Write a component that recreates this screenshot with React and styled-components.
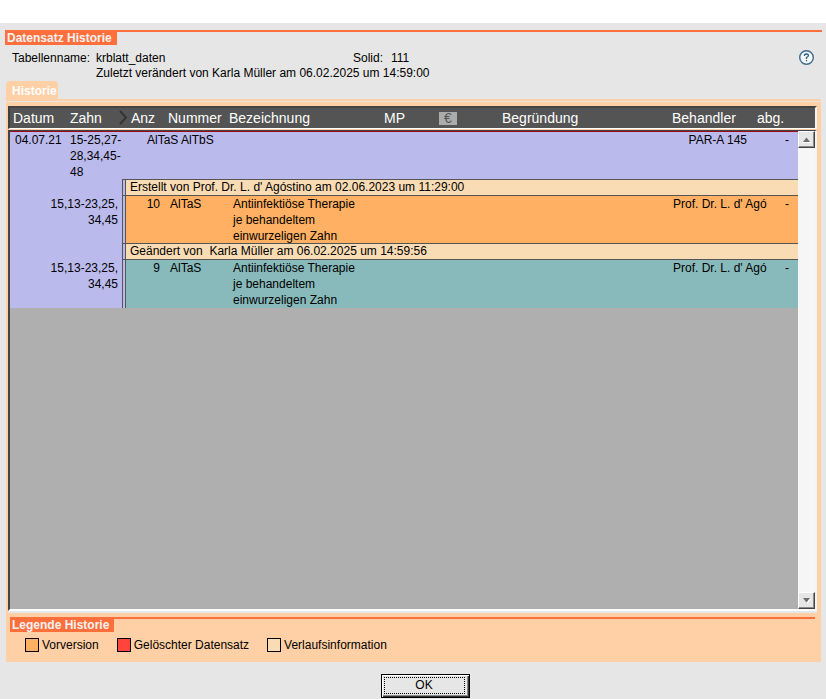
import React from "react";
import styled, { createGlobalStyle } from "styled-components";

const color = {
  page: "#e6e6e6",
  accent: "#ff6f3c",
  peach: "#ffd0a6",
  header: "#545454",
  line: "#555555",
  empty: "#afafaf",
  entry: "#bbbaec",
  info: "#fadcb4",
  previous: "#ffb062",
  current: "#88babb",
  deleted: "#ff443c",
};

const GlobalStyle = createGlobalStyle`
  * { box-sizing: border-box; }
  html, body { margin: 0; padding: 0; }
  body {
    background: #fff;
    color: #000;
    font: 12px/15px "Liberation Sans", Arial, sans-serif;
  }
  button { font: inherit; color: inherit; }
`;

const Page = styled.div`
  display: flex;
  flex-direction: column;
  min-height: 100vh;
  padding-top: 23px;
`;

const Dialog = styled.main`
  flex: 1;
  display: flex;
  flex-direction: column;
  padding: 7px 4px 1px 5px;
  background: ${color.page};
`;

const Heading = styled.h2`
  margin: 0;
  height: 15px;
  border-top: 2px solid ${color.accent};
  font-size: 12px;
  line-height: 13px;
`;

const HeadingLabel = styled.span`
  display: inline-block;
  padding: 0 5px 0 2px;
  background: ${color.accent};
  color: #f2f2f2;
`;

const RecordBar = styled.section`
  display: flex;
  justify-content: space-between;
  padding: 6px 8px 0 7px;
`;

const RecordInfo = styled.dl`
  display: grid;
  grid-template-columns: 84px 257px 38px auto;
  margin: 0;
  white-space: nowrap;
`;

const Term = styled.dt``;

const Value = styled.dd`
  margin: 0;
`;

const ChangeNote = styled.dd`
  grid-column: 2 / -1;
  margin: 0;
`;

const HelpButton = styled.button`
  width: 15px;
  height: 15px;
  margin-top: -1px;
  padding: 0;
  border: 0;
  background: none;
`;

const HelpDrawing = styled.svg`
  display: block;
`;

const TabList = styled.div`
  display: flex;
  margin: 0 1px;
  border-bottom: 2px solid ${color.peach};
`;

const Tab = styled.button`
  height: 18px;
  padding: 2px 1px 0 6px;
  border: 0;
  border-radius: 4px 4px 0 0;
  background: ${color.peach};
  color: #fff;
  font-weight: bold;
  line-height: 15px;
`;

const Panel = styled.section`
  flex: 1;
  display: flex;
  flex-direction: column;
  margin: 1px 1px 0;
  padding: 4px 4px 0 2px;
  background: ${color.peach};
`;

const HeaderFrame = styled.div`
  border: 2px solid #3f3f3f;
  border-top-color: #444;
  border-right: 2px solid #f4f4f4;
  border-bottom: 1px solid #fff;
  padding-right: 17px;
  background: ${color.header};
`;

const ListFrame = styled.div`
  flex: 1;
  display: flex;
  min-height: 200px;
  margin-top: 1px;
  border: solid #444;
  border-width: 1px 2px 2px 2px;
  border-right-color: #f4f4f4;
  border-bottom-color: #fff;
`;

const Viewport = styled.div`
  flex: 1;
  min-width: 0;
  overflow: hidden;
  border-top: 1px solid #9a0a18;
  background: ${color.empty};
`;

const Table = styled.table`
  width: 100%;
  table-layout: fixed;
  border-collapse: separate;
  border-spacing: 0;
`;

const Col = styled.col`
  width: ${(p) => p.$width || "auto"};
`;

const HeadCell = styled.th`
  position: relative;
  height: 20px;
  padding: 0 0 0 ${(p) => p.$indent || 2}px;
  color: #fff;
  font-size: 14px;
  font-weight: normal;
  line-height: 20px;
  text-align: left;
  white-space: nowrap;
`;

const Chevron = styled.svg`
  position: absolute;
  top: 2px;
  left: -3px;
`;

const EuroBadge = styled.span`
  display: block;
  width: 18px;
  height: 13px;
  margin-left: 1px;
  background: #acacac;
  color: ${color.header};
  line-height: 13px;
  text-align: center;
`;

const Cell = styled.td`
  padding: 0 ${(p) => p.$right || 0}px 0 ${(p) => p.$left || 0}px;
  background: ${(p) => color[p.$tone || "entry"]};
  line-height: 16px;
  text-align: ${(p) => p.$align || "left"};
  vertical-align: top;
  white-space: pre;
`;

const GutterCell = styled(Cell)`
  border-left: 1px solid ${color.line};
  border-right: 1px solid ${color.line};
`;

const InfoCell = styled(Cell)`
  border-bottom: 1px solid ${color.line};
  box-shadow: 0 -1px 0 ${color.line};
  line-height: 15px;
`;

const InfoGutter = styled(GutterCell)`
  border-bottom: 1px solid ${color.line};
  box-shadow: 0 -1px 0 ${color.line};
`;

const ScrollBar = styled.div`
  display: flex;
  flex-direction: column;
  justify-content: space-between;
  width: 17px;
  background: #f6f6f6;
`;

const ScrollButton = styled.button`
  display: grid;
  place-items: center;
  width: 17px;
  height: 17px;
  padding: 0;
  border: 1px solid #fff;
  border-right-color: #444;
  border-bottom-color: #444;
  background: ${color.page};
  box-shadow: inset -1px -1px 0 #8a8a8a;
`;

const PanelEdge = styled.div`
  height: 2px;
  background: ${color.page};
`;

const Legend = styled.section`
  padding: 4px 2px 10px 2px;
`;

const LegendList = styled.ul`
  display: flex;
  flex-wrap: wrap;
  gap: 18px;
  margin: 6px 0 0;
  padding: 0 0 0 15px;
  list-style: none;
`;

const LegendItem = styled.li`
  display: flex;
  align-items: center;
  gap: 3px;
  line-height: 14px;
`;

const Swatch = styled.span`
  width: 14px;
  height: 14px;
  border: 1px solid #000;
  background: ${(p) => color[p.$tone]};
`;

const Footer = styled.footer`
  display: flex;
  justify-content: center;
  padding: 12px 0 0 23px;
`;

const OkButton = styled.button`
  width: 89px;
  height: 24px;
  padding: 1px;
  border: 1px solid #000;
  background: ${color.page};
  box-shadow: inset 1px 1px 0 #fff, inset -1px -1px 0 #333, inset -2px -2px 0 #888;
`;

const OkFocus = styled.span`
  display: block;
  margin: 0 3px 1px 1px;
  border: 1px dotted #000;
  line-height: 15px;
`;

const columns = ["56px", "56px", "4px", "40px", "61px", "155px", "54px", "64px", null, "87px", "43px"];

const history = [
  { note: "Erstellt von Prof. Dr. L. d' Agóstino am 02.06.2023 um 11:29:00", count: 10, tone: "previous" },
  { note: "Geändert von  Karla Müller am 06.02.2025 um 14:59:56", count: 9, tone: "current" },
];

const Columns = () => (
  <colgroup>
    {columns.map((width, i) => (
      <Col key={i} $width={width} />
    ))}
  </colgroup>
);

const SectionHeading = ({ children }) => (
  <Heading>
    <HeadingLabel>{children}</HeadingLabel>
  </Heading>
);

const Arrow = ({ down }) => (
  <svg width="9" height="7" viewBox="0 0 9 7" aria-hidden="true">
    <path d={down ? "M2 2h7L5.500 6.500z" : "M1 6h8v1H1z"} fill="#fff" />
    <path d={down ? "M1 1h7L4.500 5.500z" : "M1 6h7L4.500 1.500z"} fill="#6e6e6e" />
  </svg>
);

const HistoryEntry = ({ note, count, tone }) => (
  <>
    <tr>
      <Cell colSpan={2} />
      <InfoGutter />
      <InfoCell colSpan={8} $tone="info" $left={4}>{note}</InfoCell>
    </tr>
    <tr>
      <Cell colSpan={2} $align="right" $right={4}>{"15,13-23,25,\n34,45"}</Cell>
      <GutterCell />
      <Cell $tone={tone} $align="right" $right={6}>{count}</Cell>
      <Cell $tone={tone} $left={4}>AlTaS</Cell>
      <Cell $tone={tone} $left={6}>{"Antiinfektiöse Therapie\nje behandeltem\neinwurzeligen Zahn"}</Cell>
      <Cell $tone={tone} />
      <Cell $tone={tone} />
      <Cell $tone={tone} />
      <Cell $tone={tone} $left={5}>Prof. Dr. L. d' Agó</Cell>
      <Cell $tone={tone} $align="right" $right={9}>-</Cell>
    </tr>
  </>
);

export default function App() {
  return (
    <Page>
      <GlobalStyle />
      <Dialog>
        <SectionHeading>Datensatz Historie</SectionHeading>
        <RecordBar>
          <RecordInfo>
            <Term>Tabellenname:</Term>
            <Value>krblatt_daten</Value>
            <Term>Solid:</Term>
            <Value>111</Value>
            <ChangeNote>Zuletzt verändert von Karla Müller am 06.02.2025 um 14:59:00</ChangeNote>
          </RecordInfo>
          <HelpButton type="button" aria-label="Hilfe">
            <HelpDrawing width="15" height="15" viewBox="0 0 15 15" aria-hidden="true">
              <circle cx="7.500" cy="7.500" r="6.800" fill="#f4f8fa" stroke="#3f6c8c" strokeWidth="1.400" />
              <path d="M5.500 6V5q.5-1 2-1 2 0 2 1.500Q9.500 6.500 7.500 7.500V9M7.500 10v1.300" fill="none" stroke="#2f5f82" strokeWidth="1.300" />
            </HelpDrawing>
          </HelpButton>
        </RecordBar>

        <TabList role="tablist">
          <Tab type="button" role="tab" aria-selected="true">Historie</Tab>
        </TabList>

        <Panel>
          <HeaderFrame>
            <Table>
              <Columns />
              <thead>
                <tr>
                  <HeadCell $indent={3}>Datum</HeadCell>
                  <HeadCell $indent={4}>Zahn</HeadCell>
                  <HeadCell>
                    <Chevron width="9" height="15" viewBox="0 0 9 15" aria-hidden="true">
                      <path d="M1 1l6 6.500L1 14" fill="none" stroke="#333" strokeWidth="2" />
                    </Chevron>
                  </HeadCell>
                  <HeadCell $indent={5}>Anz</HeadCell>
                  <HeadCell>Nummer</HeadCell>
                  <HeadCell>Bezeichnung</HeadCell>
                  <HeadCell>MP</HeadCell>
                  <HeadCell>
                    <EuroBadge>€</EuroBadge>
                  </HeadCell>
                  <HeadCell>Begründung</HeadCell>
                  <HeadCell $indent={4}>Behandler</HeadCell>
                  <HeadCell>abg.</HeadCell>
                </tr>
              </thead>
            </Table>
          </HeaderFrame>
          <ListFrame>
            <Viewport>
              <Table aria-label="Historie">
                <Columns />
                <tbody>
                  <tr>
                    <Cell $left={5}>04.07.21</Cell>
                    <Cell $left={4}>{"15-25,27-\n28,34,45-\n48"}</Cell>
                    <Cell />
                    <Cell colSpan={6} $left={21}>AlTaS AlTbS</Cell>
                    <Cell $align="right" $right={8}>PAR-A 145</Cell>
                    <Cell $align="right" $right={9}>-</Cell>
                  </tr>
                  {history.map((entry) => (
                    <HistoryEntry key={entry.note} {...entry} />
                  ))}
                </tbody>
              </Table>
            </Viewport>
            <ScrollBar>
              <ScrollButton type="button" aria-label="Nach oben">
                <Arrow />
              </ScrollButton>
              <ScrollButton type="button" aria-label="Nach unten">
                <Arrow down />
              </ScrollButton>
            </ScrollBar>
          </ListFrame>
          <PanelEdge />
          <Legend>
            <SectionHeading>Legende Historie</SectionHeading>
            <LegendList>
              <LegendItem><Swatch $tone="previous" />Vorversion</LegendItem>
              <LegendItem><Swatch $tone="deleted" />Gelöschter Datensatz</LegendItem>
              <LegendItem><Swatch $tone="info" />Verlaufsinformation</LegendItem>
            </LegendList>
          </Legend>
        </Panel>

        <Footer>
          <OkButton type="button">
            <OkFocus>OK</OkFocus>
          </OkButton>
        </Footer>
      </Dialog>
    </Page>
  );
}
